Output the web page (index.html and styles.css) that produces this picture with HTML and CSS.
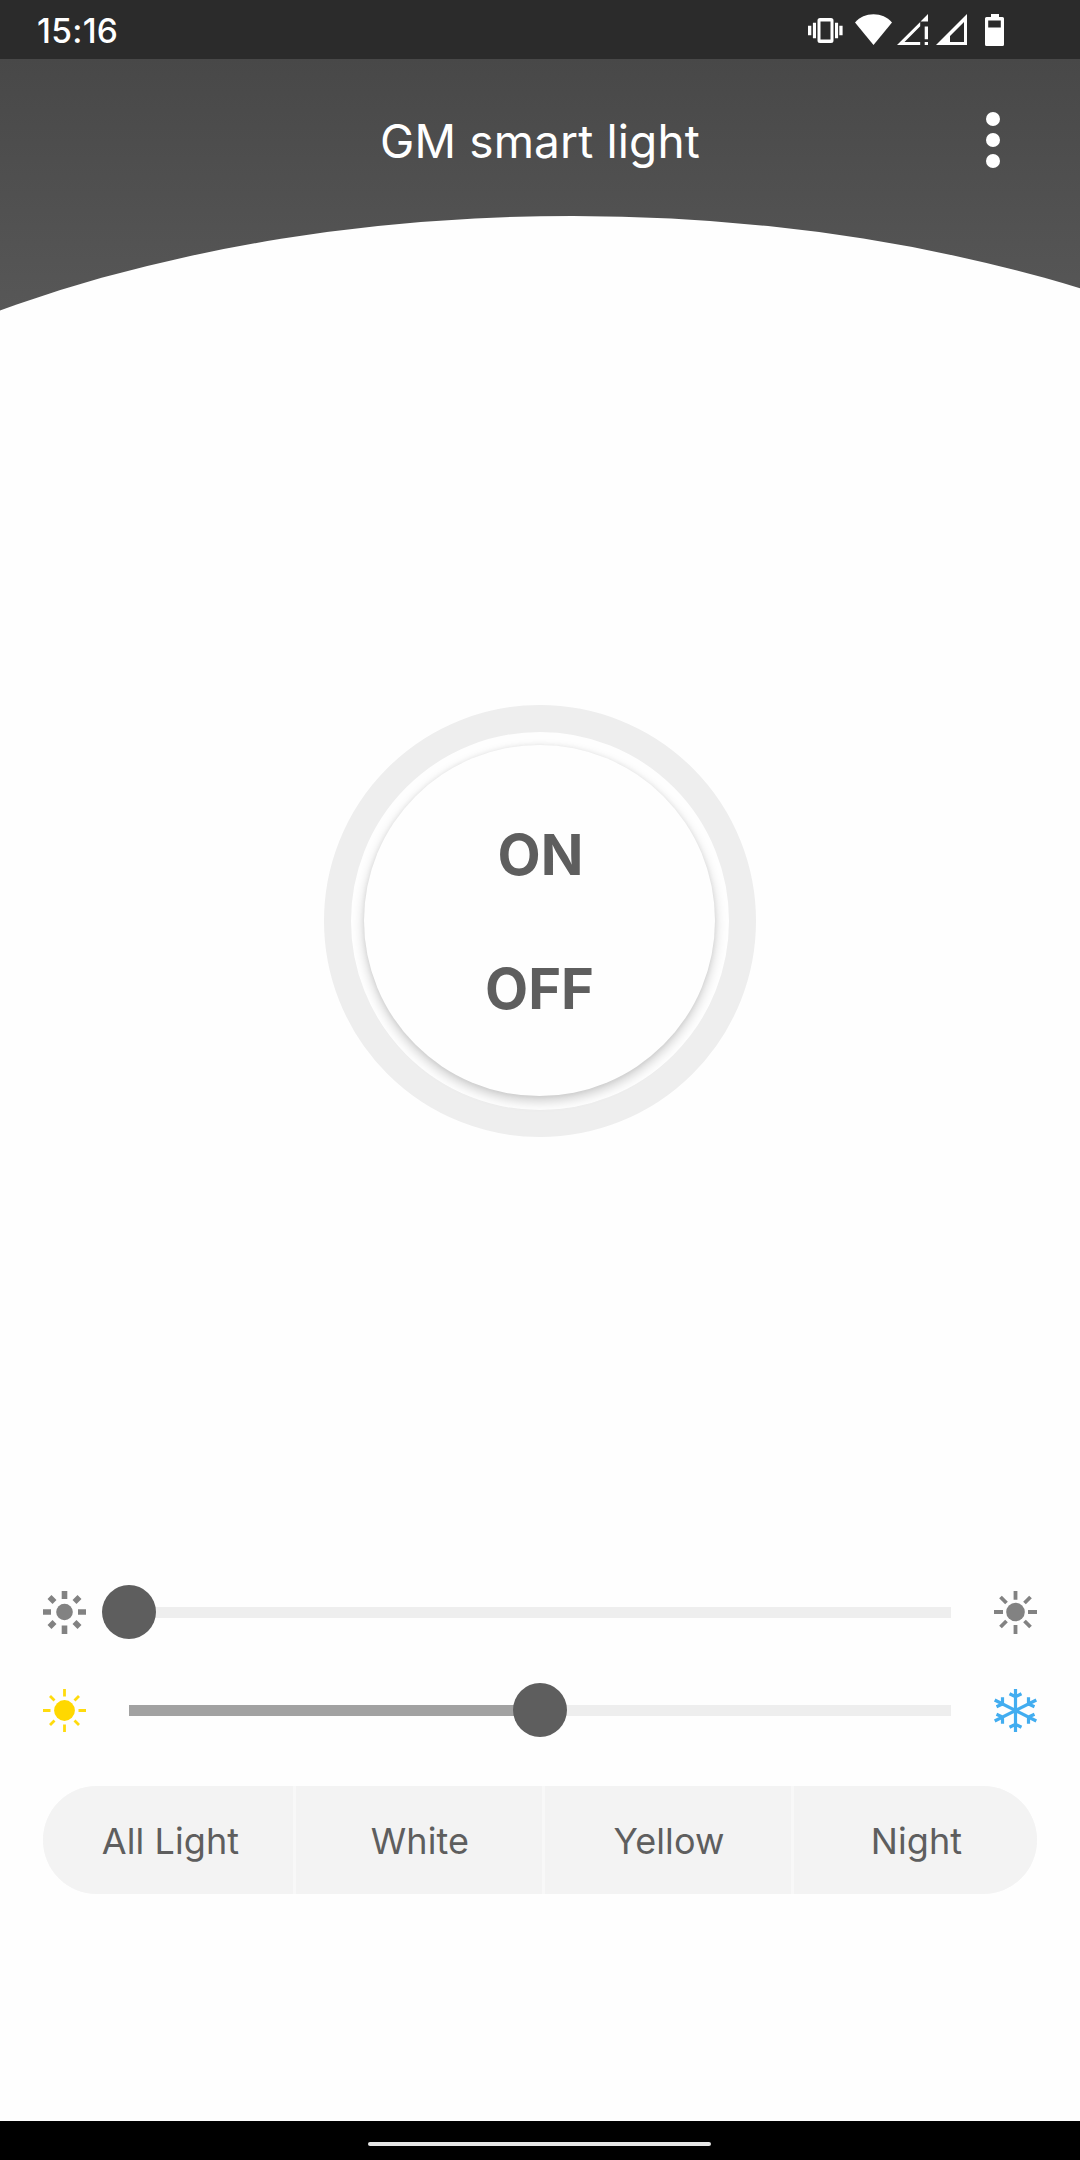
FILE: index.html
```html
<!DOCTYPE html>
<html lang="en">
<head>
<meta charset="utf-8">
<title>GM smart light</title>
<link rel="stylesheet" href="styles.css">
</head>
<body>
<div class="screen">
  <div class="status">
    <span class="clock">15:16</span>
    <div class="status-icons">
      <svg class="vibrate" width="35" height="26" viewBox="0 0 35 26" fill="#fff"><path fill-rule="evenodd" d="M12 0h11a2.500 2.500 0 0 1 2.500 2.500v20a2.500 2.500 0 0 1-2.500 2.500h-11a2.500 2.500 0 0 1-2.500-2.500v-20a2.500 2.500 0 0 1 2.500-2.500zM12.500 3.500v18h10v-18z"/><path d="M0 7.700h3.300v9.600H0zM4.900 4.700h3.100v15.600H4.900zM27 4.700h3.100v15.600H27zM31.300 7.700h3.300v9.600h-3.300z"/></svg>
      <svg class="wifi" width="37" height="31" viewBox="0 0 37 31" fill="#fff"><path d="M0 8.500C5 3 11 .3 18.500 .3S32 3 37 8.500L18.500 31z"/></svg>
      <svg class="signal" width="31" height="31" viewBox="0 0 31 31" fill="#fff"><path d="M31 0v7.500h-7.500zM0 31L23.200 8v4.200L7.500 28h15.700v3zM27.700 12.500H31v12.800h-3.300zM27.700 28H31v3h-3.300z"/></svg>
      <svg class="signal" width="31" height="31" viewBox="0 0 31 31" fill="#fff"><path fill-rule="evenodd" d="M0 31L31 0v31zM28 8L14 22v6h14z"/></svg>
      <svg class="battery" width="19" height="32" viewBox="0 0 19 32" fill="#fff"><path fill-rule="evenodd" d="M6 0h8v3h3.500a1.500 1.500 0 0 1 1.500 1.500v26a1.500 1.500 0 0 1-1.500 1.500h-16a1.500 1.500 0 0 1-1.500-1.500v-26a1.500 1.500 0 0 1 1.500-1.500H6zM3.200 6.500v7h12.600v-7z"/></svg>
    </div>
  </div>

  <header class="header">
    <svg class="curve" viewBox="0 59 1080 252"><path fill="#fefefe" d="M-427 740A1000 524 0 0 1 1573 740z"/></svg>
    <h1 class="title">GM smart light</h1>
    <button class="more" aria-label="More"><i></i><i></i><i></i></button>
  </header>

  <main class="main">
    <div class="ring">
      <div class="power">
        <button class="power-btn on">ON</button>
        <button class="power-btn">OFF</button>
      </div>
    </div>
  </main>

  <section class="controls">
    <div class="slider-row">
      <svg class="icon" viewBox="0 0 43 43" fill="none" stroke="#828282" stroke-width="5.600"><circle cx="21.500" cy="21" r="8.300" fill="#828282" stroke="none"/><path d="M21.500 0v8M21.500 34.500v8.500M0 21h8M35 21h8M6.500 6l5 5M31.500 31l5 5M36.500 6l-5 5M11.500 31l-5 5"/></svg>
      <div class="track"><div class="fill" style="width:0%"></div><div class="thumb"></div></div>
      <svg class="icon" viewBox="0 0 43 43" fill="none" stroke="#828282" stroke-width="3.800"><circle cx="21.500" cy="21" r="9.300" fill="#828282" stroke="none"/><path d="M21.500 0v8.700M21.500 34v9M0 21h9M34 21h9M6.500 6l6 6M30.500 30l6 6M36.500 6l-6 6M12.500 30l-6 6"/></svg>
    </div>
    <div class="slider-row">
      <svg class="icon" viewBox="0 0 43 43" fill="none" stroke="#ffdb0d" stroke-width="2.800"><circle cx="21.500" cy="21.500" r="10.400" fill="#ffd800" stroke="none"/><path d="M21.500 0v7.500M21.500 35.500v7.500M0 21.500h7.500M35.500 21.500h7.500M7 7l4.500 4.500M31.500 31.500l4.500 4.500M36 7l-4.500 4.500M11.500 31.500L7 36"/></svg>
      <div class="track"><div class="fill" style="width:50%"></div><div class="thumb"></div></div>
      <svg class="icon" viewBox="0 0 43 43" fill="none" stroke="#42adf0" stroke-width="3.200"><path d="M21.500 0v43M.7 11L42.300 32M42.300 11L.7 32M15.500 4.700l6 3 6-3M15.500 38.300l6-3 6 3M8.500 8.300v6.700l-6 2.700M34.500 8.300v6.700l6 2.700M8.500 34.700V28l-6-2.700M34.500 34.700V28l6-2.700"/></svg>
    </div>
    <div class="modes">
      <button class="mode first">All Light</button>
      <button class="mode">White</button>
      <button class="mode">Yellow</button>
      <button class="mode">Night</button>
    </div>
  </section>

  <nav class="navbar"><div class="handle"></div></nav>
</div>
</body>
</html>
```
FILE: styles.css
```css
* { box-sizing: border-box; }
body { margin: 0; font-family: Inter, "Liberation Sans", sans-serif; }
button { font: inherit; color: inherit; background: none; border: 0; padding: 0; }
.screen { width: 1080px; height: 2160px; display: flex; flex-direction: column; background: #fefefe; color: #5e5e5e; }

.status { height: 59px; flex: none; background: #2b2b2b; color: #fff; display: flex; justify-content: space-between; padding: 0 76px 0 37px; }
.clock { font-size: 33.5px; font-weight: 500; line-height: 62px; letter-spacing: .3px; }
.status-icons { display: flex; align-items: flex-start; padding-top: 14px; }
.vibrate { margin: 4px 12px 0 0; }
.wifi { margin-right: 5px; }
.signal { margin-right: 8px; }
.signal + .battery { margin-left: 10px; }

.header { position: relative; height: 252px; flex: none; background: linear-gradient(#484848, #575757); display: grid; grid-template-columns: 120px 1fr 120px; align-items: start; }
.curve { position: absolute; inset: 0; width: 1080px; height: 252px; }
.title { grid-column: 2; margin: 0; text-align: center; color: #fff; font-size: 46px; font-weight: 400; line-height: 56px; padding-top: 54px; letter-spacing: .15px; position: relative; }
.more { position: relative; display: flex; flex-direction: column; gap: 7px; padding: 53px 0 0 26px; }
.more i { width: 14px; height: 14px; border-radius: 50%; background: #fff; }

.main { flex: 1; padding-top: 394px; display: flex; justify-content: center; align-items: flex-start; }
.ring { width: 432px; height: 432px; border: 27px solid #eee; border-radius: 50%; background: #fefefe; display: flex; padding: 13px; }
.power { width: 351px; height: 351px; border-radius: 50%; background: #fefefe; box-shadow: 0 5px 12px rgba(0,0,0,.2), 0 0 5px rgba(0,0,0,.06); display: flex; flex-direction: column; align-items: center; justify-content: center; gap: 66px; padding-top: 2px; }
.power-btn { font-size: 56px; font-weight: 700; line-height: 68px; }
.on { padding-left: 2px; }

.controls { flex: none; height: 536px; padding: 0 43px; }
.slider-row { height: 54px; margin-bottom: 44px; display: flex; align-items: center; gap: 43px; }
.icon { width: 43px; height: 43px; flex: none; overflow: visible; }
.track { flex: 1; height: 11px; background: #eee; display: flex; align-items: center; }
.fill { height: 11px; background: #a2a2a2; }
.thumb { width: 54px; height: 54px; border-radius: 50%; background: #5e5e5e; margin: 0 -27px; flex: none; }
.modes { display: grid; grid-template-columns: 250px 246px 246px 243px; gap: 3px; width: 994px; height: 108px; margin-top: 49px; border-radius: 54px; overflow: hidden; background: #f8f8f8; }
.mode { background: #f3f3f3; font-size: 36px; letter-spacing: .1px; padding: 2px 0 0 2px; }
.first { padding-left: 5px; }

.navbar { height: 39px; flex: none; background: #000; padding: 21px 0 0 368px; }
.handle { width: 343px; height: 4px; border-radius: 2px; background: #e6e6e6; }
```
